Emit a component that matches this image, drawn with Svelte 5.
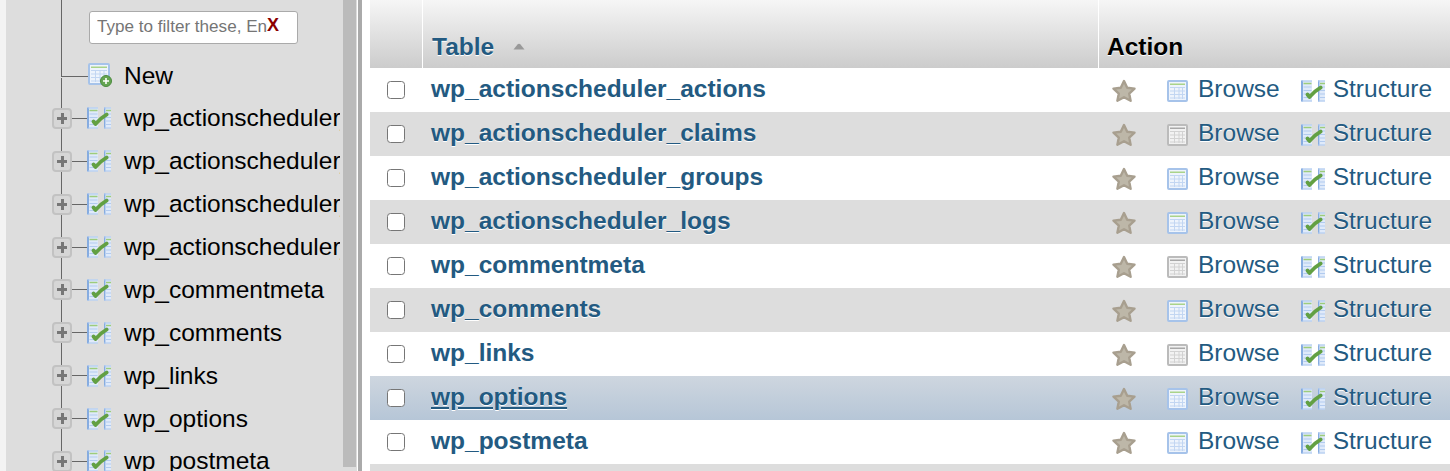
<script>
  const tree = ['wp_actionscheduler_actions','wp_actionscheduler_claims','wp_actionscheduler_groups','wp_actionscheduler_logs','wp_commentmeta','wp_comments','wp_links','wp_options','wp_postmeta'];
  const rows = [
    { name: 'wp_actionscheduler_actions', empty: false },
    { name: 'wp_actionscheduler_claims', empty: true },
    { name: 'wp_actionscheduler_groups', empty: false },
    { name: 'wp_actionscheduler_logs', empty: false },
    { name: 'wp_commentmeta', empty: true },
    { name: 'wp_comments', empty: false },
    { name: 'wp_links', empty: true },
    { name: 'wp_options', empty: false, hover: true },
    { name: 'wp_postmeta', empty: false },
    { name: 'wp_posts', empty: false }
  ];
</script>

{#snippet tableIcon(gray)}
  <svg class="tbl" viewBox="0 0 21 22" width="21" height="22" aria-hidden="true">
    <rect x="1" y="1" width="19" height="20" rx="1" fill={gray ? '#f2f2f2' : '#eef4fc'} stroke={gray ? '#bbbbbb' : '#a6c3ea'} stroke-width="2"/>
    <rect x="3" y="3.5" width="15" height="1.5" fill={gray ? '#a8a8a8' : '#a9d38a'}/>
    <path d="M3 7.5h15M3 11h15M3 14.5h15M3 18h15M7.5 7v12M12 7v12M15.5 7v12" stroke={gray ? '#d2d2d2' : '#c2d6f2'} stroke-width="1" fill="none"/>
  </svg>
{/snippet}

{#snippet structIcon()}
  <svg class="struct" viewBox="0 0 24 22" width="24" height="22" aria-hidden="true">
    <path d="M11 0.5H0V21.5H11Z" fill="#dfeafa"/>
    <path d="M1 0.5V21.5" stroke="#86ace0" stroke-width="2" fill="none"/>
    <path d="M1 1H11M1 21H11" stroke="#a9c6ee" fill="none"/>
    <rect x="17" y="0.5" width="7" height="21" fill="#dfeafa"/>
    <path d="M17.7 0.5V21.5" stroke="#86ace0" stroke-width="1.4" fill="none"/>
    <path d="M17 1H24M17 21H24" stroke="#a9c6ee" fill="none"/>
    <path d="M2.5 3.5h8M19 3.5h5" stroke="#9dcc7c" stroke-width="1.5"/>
    <path d="M2.5 7h8M2.5 10.5h8M2.5 14h8M2.5 17.5h8M19 7h5M19 10.5h5M19 14h5M19 17.5h5" stroke="#b2cbef"/>
    <path d="M6.5 14.5l2 2.5L14 11.5l5.7-4" stroke="#62a043" stroke-width="3.8" fill="none" stroke-linejoin="round" stroke-linecap="round"/>
  </svg>
{/snippet}

<div class="page">
  <div class="gutter"></div>
  <aside class="sidebar">
    <div class="tree">
      <div class="filter">
        <span class="trunk"></span>
        <div class="field">
          <input type="text" placeholder="Type to filter these, Enter to search all" />
          <span class="clear">X</span>
        </div>
      </div>
      <div class="node new">
        <span class="corner"></span>
        <span class="trunk lower"></span>
        <svg class="newicon" viewBox="0 0 24 24" width="24" height="24" aria-hidden="true">
          <rect x="1" y="1" width="20" height="20" rx="1" fill="#eef4fc" stroke="#a6c3ea" stroke-width="2"/>
          <rect x="3" y="3.5" width="16" height="1.5" fill="#a9d38a"/>
          <path d="M3 7.5h16M3 11h16M3 14.5h16M3 18h16M7.5 7v12M12 7v12M16 7v12" stroke="#c2d6f2" fill="none"/>
          <circle cx="18" cy="18" r="5.5" fill="#65a552" stroke="#4a8a3e"/>
          <path d="M18 15v6M15 18h6" stroke="#fff" stroke-width="1.6"/>
        </svg>
        <span class="label">New</span>
      </div>
      {#each tree as name}
        <div class="node">
          <span class="trunk"></span>
          <span class="expander"><span class="plus"></span></span>
          <span class="branch"></span>
          {@render structIcon()}
          <span class="label">{name}</span>
        </div>
      {/each}
    </div>
    <div class="track"><div class="thumb"></div></div>
  </aside>
  <div class="divider"></div>
  <main class="content">
    <div class="row head">
      <div class="cell check"></div>
      <div class="cell title">
        <a href="#top">Table</a>
        <svg class="sort" viewBox="0 0 12 7" width="12" height="7" aria-hidden="true"><path d="M0.5 6.5L4.5 1.5Q6 0 7.5 1.5L11.5 6.5Z" fill="#999"/></svg>
      </div>
      <div class="cell actionhead">Action</div>
    </div>
    {#each rows as row, i}
      <div class="row" class:even={i % 2 === 1} class:hover={row.hover}>
        <div class="cell check"><span class="box"></span></div>
        <div class="cell name"><a href="#top">{row.name}</a></div>
        <div class="cell actions">
          <svg class="star" viewBox="0 0 24 24" width="24" height="24" aria-hidden="true">
            <path d="M12 2l3.2 6.7 7.3.9-5.3 5 1.4 7.2L12 18.2l-6.6 3.6 1.4-7.2-5.3-5 7.3-.9z" fill="#bdb7a8" stroke="#a89f8f" stroke-width="2.4" stroke-linejoin="round"/>
          </svg>
          <a class="act browse" href="#top">{@render tableIcon(row.empty)}<span>Browse</span></a>
          <a class="act" href="#top">{@render structIcon()}<span>Structure</span></a>
        </div>
      </div>
    {/each}
  </main>
</div>

<style>
  :global(body) { margin: 0; background: #fff; }
  .page {
    display: flex;
    height: 471px;
    overflow: hidden;
    font-family: "Liberation Sans", Arial, sans-serif;
    font-size: 24.5px;
  }
  .gutter { width: 6px; flex: none; background: #f3f3f3; }
  .sidebar { width: 351px; flex: none; display: flex; background: #dddddd; }
  .tree { width: 334px; flex: none; overflow: hidden; }
  .track { width: 17px; flex: none; padding-left: 3px; box-sizing: border-box; }
  .thumb { width: 13px; height: 467px; background: #bbbbbb; }
  .divider { width: 4px; flex: none; margin-left: 1px; background: #aaaaaa; }
  .content { flex: 1; margin-left: 8px; min-width: 0; }

  .filter { position: relative; height: 54px; box-sizing: border-box; padding: 10px 0 0 83px; }
  .field { position: relative; width: 209px; height: 33px; }
  .field input {
    width: 100%; height: 100%; box-sizing: border-box; margin: 0;
    padding: 0 30px 0 7px;
    border: 1px solid #aaaaaa; border-radius: 3px; background: #fff;
    font: 17.1px "Liberation Sans", Arial, sans-serif;
  }
  .field input::placeholder { color: #757575; opacity: 1; }
  .clear {
    position: absolute; left: 178px; top: 5px;
    color: #8b0000; font-size: 18px; font-weight: bold;
  }

  .node {
    position: relative; display: flex; align-items: center;
    height: 42.9px; padding-left: 46px; white-space: nowrap; color: #000;
  }
  .trunk { position: absolute; left: 55px; top: 0; bottom: 0; width: 1px; background: #666; }
  .trunk.lower { top: 24px; }
  .corner {
    position: absolute; left: 55px; top: 0; width: 27px; height: 23px;
    border-left: 1px solid #666; border-bottom: 1px solid #666; box-sizing: border-box;
  }
  .new { padding-left: 82px; }
  .newicon { flex: none; }
  .expander {
    position: relative; flex: none; width: 20px; height: 21px; box-sizing: border-box;
    border: 2px solid #c2c2c2; border-radius: 4px; background: #d6d6d6;
  }
  .plus::before, .plus::after { content: ""; position: absolute; background: #777; }
  .plus::before { left: 3px; right: 3px; top: 7px; height: 3px; }
  .plus::after { top: 3px; bottom: 3px; left: 7px; width: 3px; }
  .branch { flex: none; width: 15px; height: 1px; background: #666; }
  .struct { flex: none; }
  .label { margin-left: 13px; }
  .new .label { margin-left: 12px; margin-top: 2px; }

  .row { display: grid; grid-template-columns: 52px 676px 1fr; height: 44px; background: #fff; }
  .row.even { background: #dddddd; }
  .row.hover { background: linear-gradient(#ced6df, #b6c6d7); }
  .row.hover .name a { text-decoration: underline; }
  .row.even .name a, .row.even .act, .row.hover .name a, .row.hover .act { text-shadow: 0 1px 0 #fff; }

  .head { height: 68px; background: linear-gradient(#f6f6f6, #cccccc); }
  .head .cell + .cell { border-left: 1px solid #fff; }
  .title, .actionhead {
    font-weight: bold; display: flex; align-items: flex-end;
    padding: 0 0 7px 8px; text-shadow: 0 1px 0 #fff; line-height: 28px;
  }
  .title { padding-left: 9px; }
  .title a { color: #235a81; text-decoration: none; }
  .actionhead { color: #000; }
  .sort { margin: 0 0 11px 19px; }

  .check { display: flex; align-items: center; padding-left: 17px; }
  .box {
    width: 18px; height: 18px; box-sizing: border-box;
    border: 1.5px solid #767676; border-radius: 3.5px; background: #fff;
  }
  .name { display: flex; align-items: center; padding: 0 0 3px 9px; font-weight: bold; }
  .name a { color: #235a81; text-decoration: none; }
  .actions { display: flex; align-items: center; padding-left: 14px; }
  .star { flex: none; margin-top: 1px; }
  .act {
    display: flex; align-items: center; gap: 8px;
    color: #235a81; text-decoration: none; margin-left: 21px;
  }
  .act span { margin-top: -3px; }
  .act svg { flex: none; margin-top: 2px; }
  .act.browse { margin-left: 31px; gap: 10px; }
</style>
